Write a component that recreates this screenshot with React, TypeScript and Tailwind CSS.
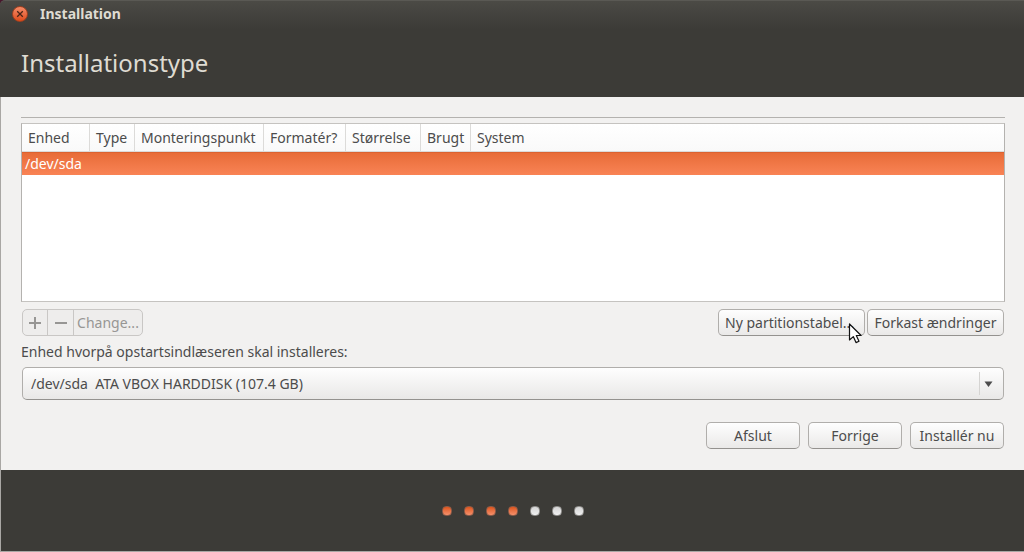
import React from "react";

const columns = [
  { label: "Enhed", width: "w-[68px]" },
  { label: "Type", width: "w-[45px]" },
  { label: "Monteringspunkt", width: "w-[129px]" },
  { label: "Formatér?", width: "w-[82px]" },
  { label: "Størrelse", width: "w-[75px]" },
  { label: "Brugt", width: "w-[50px]" },
  { label: "System", width: "" },
];

const steps = [true, true, true, true, false, false, false];

const buttonFace =
  "h-[27px] rounded-[5px] border border-[#b0aeab] border-b-[#94928f] bg-linear-to-b from-[#fefefe] to-[#eae9e8] text-center leading-5 whitespace-nowrap";

function Pointer() {
  return (
    <svg className="pointer-events-none absolute top-3.5 right-0.5 h-[22px] w-[15px]" viewBox="0 0 15 22" aria-hidden="true">
      <path d="M1.5 1v16l3.8-3.4 2.7 6 3-1.4-2.7-5.7h4.8z" fill="#fff" stroke="#111" strokeWidth="1.2" strokeLinejoin="round" />
    </svg>
  );
}

export default function App() {
  return (
    <div className="flex min-h-screen flex-col bg-[#48162c] font-['Noto_Sans',sans-serif] text-sm text-[#4c4c4c]">
      <header className="h-[97px] rounded-tl-[5px] border-t border-[#5a5954] bg-[#3c3b37] bg-linear-to-b from-[#4b4a45] to-[#3c3b37] to-[28px] text-[#dfdbd2]">
        <div className="flex h-[26px] items-center gap-3 pl-3">
          <button
            type="button"
            aria-label="Luk"
            className="flex size-4 items-center justify-center rounded-full border border-[#a04020] bg-linear-to-b from-[#f58a66] to-[#df4a16]"
          >
            <svg className="size-2" viewBox="0 0 8 8" aria-hidden="true">
              <path d="M1.200 1.200l5.600 5.600M6.800 1.200l-5.600 5.600" stroke="#4a2417" strokeWidth="1.300" />
            </svg>
          </button>
          <span className="text-sm leading-5 font-bold">Installation</span>
        </div>
        <h1 className="pt-[18px] pl-[21px] text-2xl leading-9">Installationstype</h1>
      </header>

      <main className="flex flex-1 flex-col border-l border-[#a9a7a4] bg-[#f2f1f0] px-5 pt-5 pb-[21px]">
        <hr className="mr-[-1px] border-[#b4b2af]" />
        <div className="mt-[5px] mr-[-1px] min-h-[179px] flex-1 border border-[#c5c3c0] border-r-[#b4b2af] border-l-[#b4b2af] bg-white">
          <table className="w-full table-fixed border-separate border-spacing-0 text-left">
            <thead>
              <tr className="h-7 bg-linear-to-b from-white to-[#f9f9f9]">
                {columns.map((column) => (
                  <th
                    key={column.label}
                    scope="col"
                    className={`${column.width} border-r border-b border-[#dcdbd9] p-0 pl-1.5 leading-5 font-normal whitespace-nowrap last:border-r-0`}
                  >
                    {column.label}
                  </th>
                ))}
              </tr>
            </thead>
            <tbody>
              <tr className="h-[23px] bg-linear-to-b from-[#e76b36] to-[#f98355] text-white">
                <td colSpan={7} className="border-t border-[#dc6230] p-0 pl-[3px] leading-5">
                  /dev/sda
                </td>
              </tr>
            </tbody>
          </table>
        </div>

        <div className="mt-[7px] flex items-center justify-between pl-px">
          <div className="flex h-[27px] divide-x divide-[#c9c7c5] rounded-[5px] border border-[#c9c7c5] bg-[#eeedec] text-[#979694]">
            <button type="button" disabled aria-label="Tilføj" className="flex w-[25px] items-center justify-center">
              <svg className="size-3" viewBox="0 0 12 12" aria-hidden="true">
                <path d="M0 6h12M6 0v12" stroke="currentColor" strokeWidth="2" />
              </svg>
            </button>
            <button type="button" disabled aria-label="Fjern" className="flex w-[26px] items-center justify-center">
              <svg className="size-3" viewBox="0 0 12 12" aria-hidden="true">
                <path d="M0 6h12" stroke="currentColor" strokeWidth="2" />
              </svg>
            </button>
            <button type="button" disabled className="w-[68px] leading-5 whitespace-nowrap">
              Change...
            </button>
          </div>
          <div className="flex gap-0.5">
            <div className="relative">
              <button type="button" className={`${buttonFace} block w-[147px] px-1.5 text-left`}>
                Ny partitionstabel...
              </button>
              <Pointer />
            </div>
            <button type="button" className={`${buttonFace} w-[137px]`}>Forkast ændringer</button>
          </div>
        </div>

        <label htmlFor="boot-device" className="mt-1.5 leading-5">
          Enhed hvorpå opstartsindlæseren skal installeres:
        </label>
        <div className="relative mt-[5px] ml-px">
          <select
            id="boot-device"
            className="block h-[33px] w-full appearance-none rounded-[5px] border border-[#b0aeab] border-b-[#94928f] bg-linear-to-b from-[#fefefe] to-[#e9e8e7] pl-2"
          >
            <option>{"/dev/sda\u00a0 ATA VBOX HARDDISK (107.4 GB)"}</option>
          </select>
          <div className="pointer-events-none absolute inset-y-[5px] right-[11px] flex items-center border-l border-[#d5d4d2] pl-1">
            <svg className="h-[6px] w-[9px]" viewBox="0 0 9 6" aria-hidden="true">
              <path d="M0.500 0.500h8L4.500 6z" fill="#4c4c4c" />
            </svg>
          </div>
        </div>

        <div className="mt-[22px] flex justify-end gap-2">
          <button type="button" className={`${buttonFace} w-[94px]`}>Afslut</button>
          <button type="button" className={`${buttonFace} w-[94px]`}>Forrige</button>
          <button type="button" className={`${buttonFace} w-[94px]`}>Installér nu</button>
        </div>
      </main>

      <footer className="flex h-[82px] items-center justify-center gap-3 border-b border-l border-[#a9a7a4] bg-[#3c3b37]">
        {steps.map((done, index) => (
          <span
            key={index}
            className={`size-2.5 rounded-[4px] border ${
              done
                ? "border-[#8a5a48] bg-linear-to-b from-[#dd5418] to-[#f4906a]"
                : "border-[#8d8c89] bg-linear-to-b from-[#d4d4d4] to-[#f0f0f0]"
            }`}
          />
        ))}
      </footer>
    </div>
  );
}
